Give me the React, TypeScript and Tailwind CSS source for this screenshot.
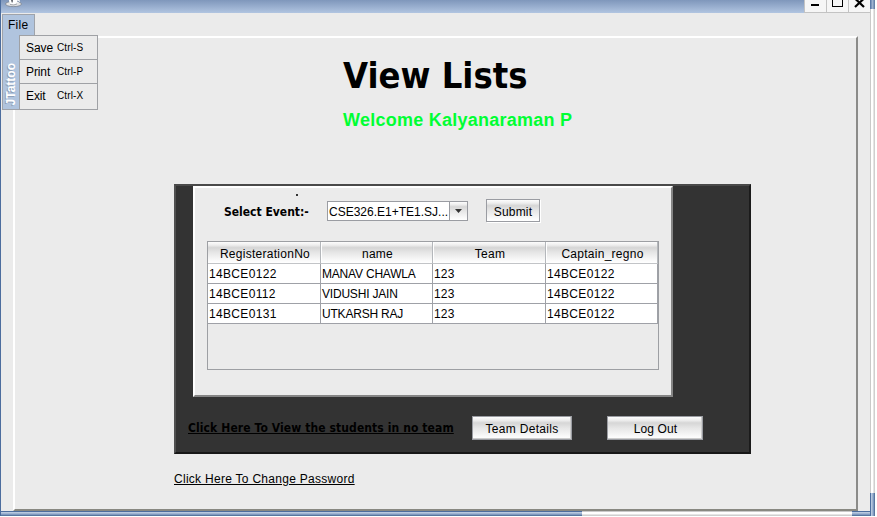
import React from "react";

const rows = [
  ["14BCE0122", "MANAV CHAWLA", "123", "14BCE0122"],
  ["14BCE0112", "VIDUSHI JAIN", "123", "14BCE0122"],
  ["14BCE0131", "UTKARSH RAJ", "123", "14BCE0122"],
];

const cellTracking = ["tracking-[0.33px]", "tracking-[-0.2px]", "tracking-[0.2px]", "tracking-[0.33px]"];

const menu = [
  ["Save", "Ctrl-S"],
  ["Print", "Ctrl-P"],
  ["Exit", "Ctrl-X"],
];

const metal =
  "bg-[linear-gradient(to_bottom,#fdfdfd_0%,#ededed_15%,#d6d6d6_27%,#e6e6e6_50%,#fbfbfb_90%,#ffffff_100%)]";
const tahoma = "font-['DejaVu_Sans_Condensed','DejaVu_Sans',sans-serif] font-bold [font-stretch:condensed]";

function Button({ label, className }: { label: string; className: string }) {
  return (
    <button
      className={`${metal} ${className} flex items-center justify-center border border-[#9a9ca2] pt-[2px] text-[12px] leading-[14px]`}
    >
      {label}
    </button>
  );
}

function TitleBar() {
  return (
    <header className="flex h-[13px] shrink-0 bg-linear-to-b from-[#7f97bb] to-[#b1c5e1]">
      <svg className="ml-[4px] h-[8px] w-[18px]" viewBox="0 0 18 8">
        <ellipse cx="8.5" cy="4" rx="8" ry="2.6" fill="#e2e3e5" stroke="#6f747c" strokeWidth=".6" />
        <path d="M4 0h8.500c0 3-1.500 4.300-4.300 4.300S4 3 4 0z" fill="#fff" />
        <path d="M5 4.500q4 1.200 7-.5" fill="none" stroke="#8a8d93" strokeWidth=".7" />
        <path d="M12.500.5q3-.5 2 1t-3 1" fill="none" stroke="#f2f2f2" />
        <path d="M6 0h2l-.3 2.500h-1z" fill="#60646c" />
      </svg>
      <div className="ml-auto flex h-[13px] gap-px border-b border-l border-[#c3c3c3] bg-[#c3c3c3]">
        <span className="flex w-[21px] items-start justify-center bg-[#f6f6f6] pt-[4px]">
          <i className="mr-[2px] h-[2px] w-[8px] bg-black" />
        </span>
        <span className="flex w-[21px] justify-center bg-[#f6f6f6]">
          <i className="h-[7px] w-[11px] border-x border-b border-black" />
        </span>
        <span className="flex w-[21px] justify-center bg-[#f6f6f6]">
          <svg className="h-[8px] w-[11px]" viewBox="0 0 11 8">
            <path d="M1-1.5 10 7M10-1.5 1 7" stroke="#000" strokeWidth="2.2" />
          </svg>
        </span>
      </div>
    </header>
  );
}

function FileMenu() {
  return (
    <nav className="absolute top-[14px] left-[2px]">
      <div className="h-[22px] w-[33px] border border-b-0 border-[#9fa3aa] bg-[#b0c4de] pt-[3px] pl-[5px] text-[12px] leading-[14px] tracking-[0.25px]">
        File
      </div>
      <div className="-mt-px flex">
        <div className="flex h-[75px] w-[17px] items-end border-b border-l border-[#9fa3aa] bg-[#b0c4de] pb-[4px]">
          <span className="rotate-180 text-[12px] leading-[17px] font-bold text-white [writing-mode:vertical-rl] [text-shadow:-1px_-1px_0_#8fa0b8]">
            JTattoo
          </span>
        </div>
        <div className="h-[75px] w-[79px] border border-[#9fa1a5] bg-[#ebebeb]">
          {menu.map(([name, key], i) => (
            <div
              key={name}
              className={`flex h-[24px] items-center pl-[6px] text-[12px] leading-[14px] ${i < 2 ? "border-b border-[#9fa1a5]" : ""}`}
            >
              <span className="w-[31px] tracking-[-0.1px]">{name}</span>
              <span className="text-[10px] leading-[14px] tracking-[0.1px]">{key}</span>
            </div>
          ))}
        </div>
      </div>
    </nav>
  );
}

function EventTable() {
  return (
    <div className="mt-[19px] ml-[12px] h-[129px] w-[452px] border border-[#9d9fa3]">
      <div className="grid grid-cols-[113px_112px_113px_112px]">
        {["RegisterationNo", "name", "Team", "Captain_regno"].map((h, i) => (
          <div
            key={h}
            className={`${metal} h-[22px] border-r border-b border-r-[#b4b7bb] border-b-[#c2c4c7] pt-[5px] pl-[2px] text-center text-[12px] leading-[14px] tracking-[0.27px] ${i > 0 ? "shadow-[inset_1px_0_0_white]" : ""}`}
          >
            {h}
          </div>
        ))}
        {rows.flatMap((row, r) =>
          row.map((cell, c) => (
            <div
              key={`${r}-${c}`}
              className={`h-[20px] border-r border-b border-[#9fa1a7] bg-white pt-[3px] pl-[1px] text-[12px] leading-[14px] whitespace-nowrap ${cellTracking[c]}`}
            >
              {cell}
            </div>
          )),
        )}
      </div>
    </div>
  );
}

export default function App() {
  return (
    <div className="h-[517px] w-[877px] bg-white">
      <div className="relative flex h-[516px] w-[875px] overflow-hidden bg-[#ebebeb] font-['Liberation_Sans',Arial,sans-serif] text-black">
        <div className="w-px shrink-0 bg-[#4c6d9e]" />
        <div className="flex w-[869px] flex-col">
          <TitleBar />
          <main className="mt-[23px] ml-[12px] h-[475px] w-[845px] shrink-0 border-2 border-t-white border-r-[#8b8b89] border-b-[#888881] border-l-white">
            <h1 className={`${tahoma} mt-[16px] ml-[328px] h-[44px] text-[36px] leading-[44px] whitespace-nowrap`}>
              View Lists
            </h1>
            <p className="mt-[11px] ml-[328px] h-[22px] text-[18px] leading-[22px] font-bold tracking-[0.25px] whitespace-nowrap text-[#00ff33]">
              Welcome Kalyanaraman P
            </p>
            <section className="mt-[53px] ml-[159px] h-[270px] w-[577px] border-2 border-t-[#494949] border-r-[#1b1b1b] border-b-[#171717] border-l-[#505050] bg-[#333333]">
              <div className="ml-[17px] h-[211px] w-[480px] border-2 border-t-white border-r-[#858585] border-b-[#858585] border-l-white bg-[#ebebeb]">
                <div className="ml-[101px] h-[11px] pt-[6px]">
                  <i className="block h-[2px] w-[2px] bg-[#333]" />
                </div>
                <div className="flex h-[23px] items-start">
                  <span className={`${tahoma} mt-[5px] ml-[29px] w-[103px] text-[12px] leading-[16px] whitespace-nowrap`}>
                    Select Event:-
                  </span>
                  <div className="mt-[2px] flex h-[20px] w-[141px] border border-[#9a9ca2] bg-white">
                    <span className="w-[121px] pt-[3px] pl-[1px] text-[12px] leading-[14px] whitespace-nowrap">
                      CSE326.E1+TE1.SJ...
                    </span>
                    <span className={`${metal} flex flex-1 items-center justify-center border-l border-[#9a9ca2]`}>
                      <svg className="h-[4px] w-[7px]" viewBox="0 0 7 4">
                        <path d="M0 0h7L3.5 4z" fill="#333" />
                      </svg>
                    </span>
                  </div>
                  <Button label="Submit" className="ml-[18px] h-[23px] w-[54px] tracking-[0.2px] shadow-[1px_1px_0_#fff]" />
                </div>
                <EventTable />
              </div>
              <div className="mt-[19px] flex h-[24px] items-start">
                <a
                  className={`${tahoma} mt-[4px] ml-[12px] w-[284px] text-[12px] leading-[16px] tracking-[0.1px] whitespace-nowrap underline`}
                >
                  Click Here To View the students in no team
                </a>
                <Button
                  label="Team Details"
                  className="h-[24px] w-[100px] tracking-[0.32px] shadow-[inset_-1px_-1px_0_#ccc]"
                />
                <Button
                  label="Log Out"
                  className="ml-[35px] h-[24px] w-[96px] pl-[1px] tracking-[0.12px] shadow-[inset_-1px_-1px_0_#ccc]"
                />
              </div>
            </section>
            <a className="mt-[18px] ml-[159px] block text-[12px] leading-[14px] tracking-[0.28px] whitespace-nowrap underline">
              Click Here To Change Password
            </a>
          </main>
          <footer className="flex h-[5px] shrink-0">
            <div className="w-[581px] bg-[linear-gradient(to_bottom,#4c6d9e_0_1px,#b8c9df_1px_2px,#9fb3d0_2px_3px,#7f9ac0_3px_4px,#58779f_4px)]" />
            <div className="flex-1 bg-[linear-gradient(to_bottom,#c9c9c9_0_1px,#ffffff_1px_3px,#e5e5e5_3px_4px,#cfcfcf_4px)]" />
            <div className="w-[18px] bg-[linear-gradient(to_bottom,#4c6d9e_0_1px,#b8c9df_1px_2px,#9fb3d0_2px_3px,#7f9ac0_3px_4px,#58779f_4px)]" />
          </footer>
        </div>
        <aside className="flex w-[5px] flex-col">
          <div className="h-[9px] bg-linear-to-r from-[#4c6d9e] via-[#9fb3d0] to-[#58779f]" />
          <div className="flex-1 bg-[linear-gradient(to_right,#c9c9c9_0_1px,#ffffff_1px_3px,#e5e5e5_3px_4px,#cfcfcf_4px)]" />
          <div className="h-[23px] bg-[linear-gradient(to_right,#4c6d9e_0_1px,#b8c9df_1px_2px,#9fb3d0_2px_3px,#7f9ac0_3px_4px,#58779f_4px)]" />
        </aside>
        <FileMenu />
      </div>
    </div>
  );
}
